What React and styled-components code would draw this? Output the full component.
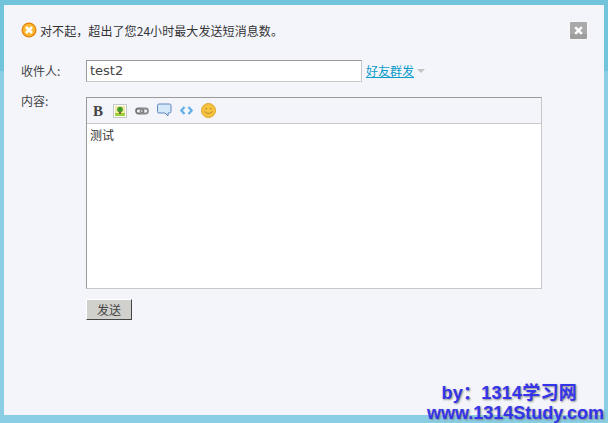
import React from "react";
import styled, { createGlobalStyle } from "styled-components";

const Global = createGlobalStyle`
  html, body { margin: 0; padding: 0; }
  body { width: 608px; height: 423px; overflow: hidden; font-family: "Noto Sans CJK SC", "Liberation Sans", sans-serif; }
`;
const Frame = styled.div`
  position: relative;
  box-sizing: border-box;
  width: 608px;
  height: 423px;
  padding: 5px 4px 8px 4px;
  background: linear-gradient(#72c3dc 0 71px, #89cee3 71px);
  overflow: hidden;
`;
const Dialog = styled.div`
  box-sizing: border-box;
  height: 410px;
  padding: 15px 16px 0 17px;
  background: #f3f5fb;
  color: #444;
  font-size: 12px;
`;
const Notice = styled.div`
  display: flex;
  align-items: center;
  justify-content: space-between;
  height: 20px;
`;
const NoticeText = styled.div`
  display: flex;
  align-items: center;
  gap: 3px;
  font-size: 12px;
  letter-spacing: 0.08px;
  color: #333;
`;
const CloseButton = styled.button`
  display: flex;
  align-items: center;
  justify-content: center;
  width: 19px;
  height: 19px;
  padding: 0;
  border: 1px solid #f8f8f8;
  border-radius: 2px;
  background: linear-gradient(#a9a9a9 0 70%, #9e9e9e 70%);
`;
const Row = styled.div`
  display: grid;
  grid-template-columns: 65px 1fr;
  margin-top: ${p => p.$top}px;
`;
const Label = styled.div`
  font-size: 12px;
  line-height: 22px;
  color: #444;
  margin-top: ${p => p.$offset || 0}px;
`;
const RecipientLine = styled.div`
  display: flex;
  align-items: center;
`;
const TextInput = styled.div`
  box-sizing: border-box;
  width: 276px;
  height: 22px;
  padding: 0 3px;
  border: 1px solid #c8c8c8;
  border-top-color: #9a9a9a;
  border-left-color: #9a9a9a;
  background: #fff;
  font: 13px/20px "DejaVu Sans", sans-serif;
  color: #444;
`;
const FriendLink = styled.a`
  margin-left: 4px;
  font-size: 12px;
  line-height: 16px;
  color: #0a9bc9;
  text-decoration: underline;
`;
const Caret = styled.span`
  width: 0;
  height: 0;
  margin: 0 0 0 3px;
  border: 4px solid transparent;
  border-top: 4px solid #c4c4c4;
  border-bottom: 0;
`;
const Editor = styled.div`
  box-sizing: border-box;
  width: 456px;
  height: 192px;
  border: 1px solid #c8c8c8;
  border-top-color: #9a9a9a;
  border-left-color: #9a9a9a;
  display: flex;
  flex-direction: column;
`;
const Toolbar = styled.div`
  display: flex;
  align-items: center;
  gap: 8px;
  padding: 0 0 0 6px;
  border-bottom: 1px solid #c8c8c8;
  box-sizing: border-box;
  height: 26px;
`;
const BoldGlyph = styled.span`
  width: 11px;
  font: bold 15px/16px "Liberation Serif", serif;
  color: #444;
  margin-right: 1px;
`;
const EditorBody = styled.div`
  flex: 1;
  background: #fff;
  padding: 2px 3px;
  font-size: 12px;
  line-height: 17px;
  color: #333;
`;
const SendButton = styled.button`
  display: block;
  box-sizing: border-box;
  width: 46px;
  height: 21px;
  margin: 10px 0 0 65px;
  padding: 0;
  border: 1px solid;
  border-color: #fff #444 #444 #fff;
  background: #d0d0cc;
  color: #444;
  font: 12px/18px "Noto Sans CJK SC", sans-serif;
`;
const Watermark = styled.div`
  position: absolute;
  right: 4px;
  bottom: 0;
  text-align: right;
  font: bold 18px/20px "Liberation Sans", "Noto Sans CJK SC", sans-serif;
  color: #3434ea;
  text-shadow: 1px 1px 2px #888;
`;
const WatermarkBy = styled.div`
  padding-right: 27px;
  letter-spacing: 0.25px;
`;

const ErrorIcon = () => (
  <svg width="16" height="16" viewBox="0 0 16 16">
    <circle cx="8" cy="8" r="7.500" fill="#e8820e" />
    <circle cx="8" cy="8" r="6.200" fill="#fbb72f" />
    <path d="M5 5l6 6M11 5l-6 6" stroke="#fff" strokeWidth="2.600" />
  </svg>
);
const CloseIcon = () => (
  <svg width="9" height="9" viewBox="0 0 9 9">
    <path d="M1.200 1.200l6.600 6.600M7.800 1.200l-6.600 6.600" stroke="#fff" strokeWidth="2.400" />
  </svg>
);
const ImageIcon = () => (
  <svg width="14" height="14" viewBox="0 0 14 14">
    <rect x="0.500" y="0.500" width="13" height="13" fill="#fff" stroke="#c8c8c8" />
    <rect x="2" y="2" width="10" height="10" fill="#f3e8a0" />
    <rect x="2" y="9" width="10" height="3" fill="#9ad23c" />
    <rect x="6" y="7" width="2" height="3" fill="#8a5a2a" />
    <circle cx="7" cy="5.500" r="2.800" fill="#3f9a2a" />
  </svg>
);
const LinkIcon = () => (
  <svg width="14" height="14" viewBox="0 0 14 14" fill="none">
    <rect x="1" y="4.500" width="7.500" height="5" rx="2.500" stroke="#777" strokeWidth="1.800" />
    <rect x="5.500" y="4.500" width="7.500" height="5" rx="2.500" stroke="#8a8a8a" strokeWidth="1.800" />
  </svg>
);
const QuoteIcon = () => (
  <svg width="15" height="15" viewBox="0 0 15 15">
    <path d="M2 1h10.500a1.500 1.500 0 0 1 1.500 1.500v6a1.500 1.500 0 0 1-1.500 1.500h-1.500v3l-3-3h-6a1.500 1.500 0 0 1-1.500-1.500v-6a1.500 1.500 0 0 1 1.500-1.500z" fill="#d5e8fa" stroke="#5f86b8" />
  </svg>
);
const CodeIcon = () => (
  <svg width="13" height="13" viewBox="0 0 13 13" fill="none">
    <path d="M4.500 3l-3.200 3.500 3.200 3.500M8.500 3l3.200 3.500-3.200 3.500" stroke="#62aee8" strokeWidth="2.200" />
  </svg>
);
const SmileIcon = () => (
  <svg width="15" height="15" viewBox="0 0 15 15" fill="none">
    <circle cx="7.500" cy="7.500" r="7" fill="#f6c340" stroke="#dca32d" />
    <circle cx="5.200" cy="5.800" r="0.800" fill="#b5822a" />
    <circle cx="9.800" cy="5.800" r="0.800" fill="#b5822a" />
    <path d="M3.800 8.500c1 2.500 6.400 2.500 7.400 0" stroke="#b5822a" />
  </svg>
);

export default function App() {
  return (
    <>
      <Global />
      <Frame>
        <Dialog>
          <Notice>
            <NoticeText>
              <ErrorIcon />
              对不起，超出了您24小时最大发送短消息数。
            </NoticeText>
            <CloseButton aria-label="关闭"><CloseIcon /></CloseButton>
          </Notice>
          <Row $top="20">
            <Label>收件人:</Label>
            <RecipientLine>
              <TextInput>test2</TextInput>
              <FriendLink>好友群发</FriendLink>
              <Caret />
            </RecipientLine>
          </Row>
          <Row $top="15">
            <Label $offset="-7">内容:</Label>
            <div>
              <Editor>
                <Toolbar>
                  <BoldGlyph>B</BoldGlyph>
                  <ImageIcon />
                  <LinkIcon />
                  <QuoteIcon />
                  <CodeIcon />
                  <SmileIcon />
                </Toolbar>
                <EditorBody>测试</EditorBody>
              </Editor>
            </div>
          </Row>
          <SendButton>发送</SendButton>
        </Dialog>
        <Watermark>
          <WatermarkBy>by：1314学习网</WatermarkBy>
          <div>www.1314Study.com</div>
        </Watermark>
      </Frame>
    </>
  );
}
